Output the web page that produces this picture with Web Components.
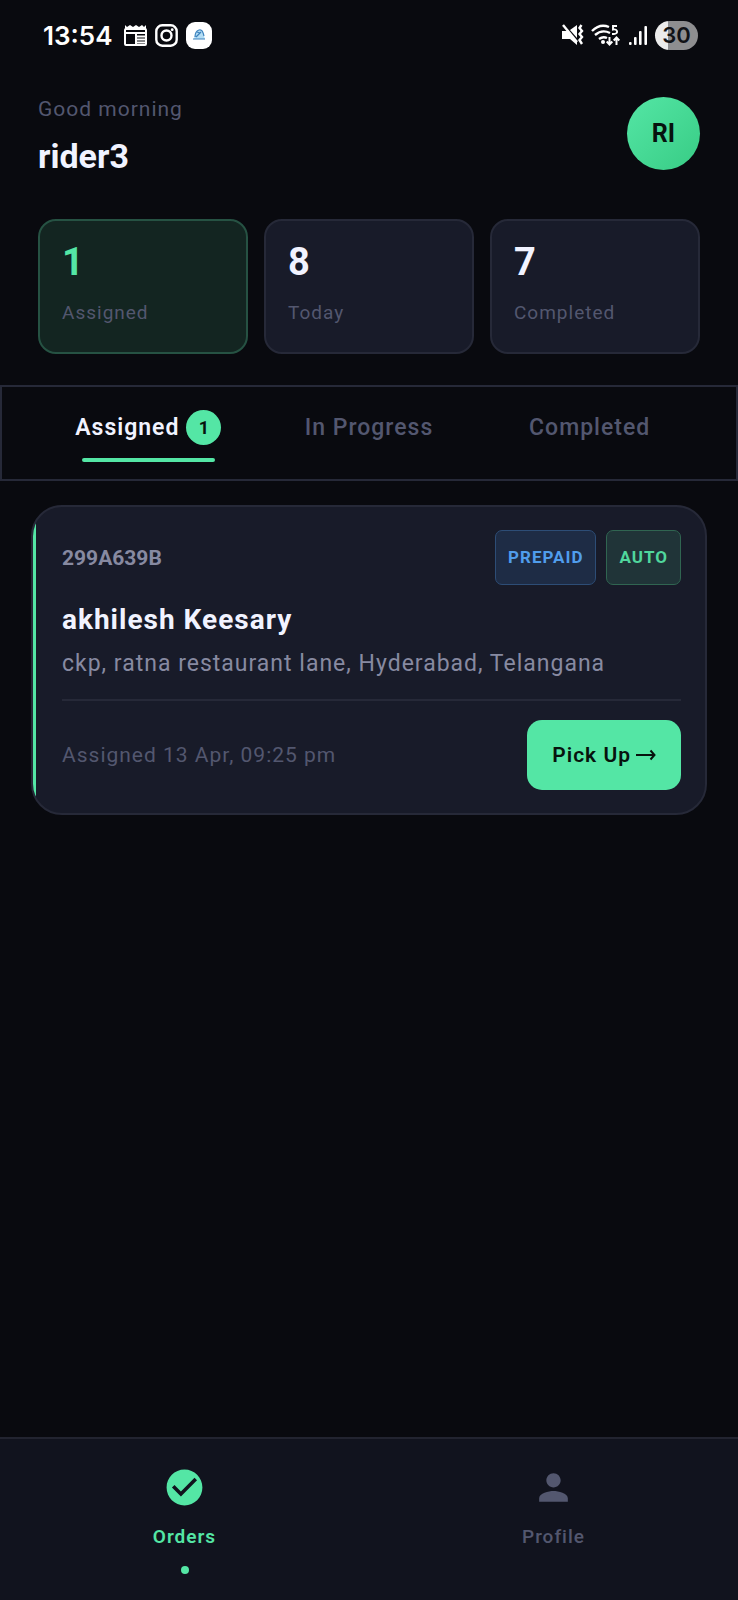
<!DOCTYPE html>
<html lang="en">
<head>
  <meta charset="UTF-8">
  <meta name="viewport" content="width=device-width, initial-scale=1">
  <title>Rider orders</title>
  <style>
    :root {
      --bg: #090a0f;
      --surface: #181b29;
      --line: #262938;
      --text: #f1f3ff;
      --soft: #878aa1;
      --muted: #53576f;
      --green: #54e6a5;
      --ink: #07130e;
      --track: 1px;
    }
    body {
      margin: 0;
      min-height: 100vh;
      display: flex;
      flex-direction: column;
      background: var(--bg);
      color: var(--text);
      font-family: Roboto, "Liberation Sans", sans-serif;
    }
    main {
      flex: 1;
    }
    .stats {
      display: grid;
      grid-template-columns: repeat(3, 1fr);
      gap: 16px;
      padding: 0 38px;
      margin-bottom: 31px;
    }
    .orders {
      padding: 24px 31px;
    }
  </style>
</head>
<body>
  <status-bar time="13:54" battery="30"></status-bar>
  <main>
    <rider-header name="rider3" initials="RI">Good morning</rider-header>
    <section class="stats">
      <stat-card value="1" active>Assigned</stat-card>
      <stat-card value="8">Today</stat-card>
      <stat-card value="7">Completed</stat-card>
    </section>
    <tab-bar>
      <tab-item count="1" active>Assigned</tab-item>
      <tab-item>In Progress</tab-item>
      <tab-item>Completed</tab-item>
    </tab-bar>
    <section class="orders">
      <order-card code="299A639B" customer="akhilesh Keesary" action="Pick Up">
        <status-chip slot="chips" type="blue">PREPAID</status-chip>
        <status-chip slot="chips">AUTO</status-chip>
        <span slot="address">ckp, ratna restaurant lane, Hyderabad, Telangana</span>
        <span slot="time">Assigned 13 Apr, 09:25 pm</span>
      </order-card>
    </section>
  </main>
  <bottom-nav>
    <nav-item href="#orders" icon="check" active>Orders</nav-item>
    <nav-item href="#profile" icon="person">Profile</nav-item>
  </bottom-nav>

  <script>
    class StatusBar extends HTMLElement {
      constructor() {
        super();
        this.attachShadow({ mode: 'open' });
        this.render();
      }

      render() {
        const style = `
        <style>
          :host {
            display: flex;
            justify-content: space-between;
            align-items: center;
            height: 70px;
            padding: 0 40px 0 43px;
            color: white;
          }
          div {
            display: flex;
            align-items: center;
          }
          svg {
            display: block;
          }
          .time {
            font-family: Inter, Roboto, sans-serif;
            font-size: 26px;
            font-weight: 600;
            margin-right: 3px;
          }
          .left {
            gap: 8px;
          }
          .right {
            gap: 7px;
          }
          .battery {
            width: 43px;
            height: 29px;
            border-radius: 15px;
            justify-content: center;
            background: linear-gradient(90deg, #ececec 30%, #8e8e90 30%);
            color: #111216;
            font-family: Inter, Roboto, sans-serif;
            font-size: 22px;
            font-weight: 600;
          }
        </style>`;

        const template = `
          <div class="left">
            <span class="time">${this.getAttribute('time')}</span>
            <svg width="23" height="22" viewBox="0 0 23 22" fill="none" stroke="#fff">
              <path d="M1 1l2 2 3-2 3 2 3-2 3 2 3-2 2 2 2-2v5H1z" fill="#fff" stroke="none"/>
              <rect x="1" y="5" width="21" height="16" rx="1" stroke-width="2"/>
              <path d="M1 9h21" stroke-width="2"/>
              <path d="M12 9v11" stroke-width="2"/>
              <path d="M13 12.500h8M13 15.500h8M13 18.500h8" stroke-width="1.800"/>
            </svg>
            <svg width="23" height="23" viewBox="0 0 23 23" fill="none" stroke="#fff" stroke-width="2.400">
              <rect x="1.300" y="1.300" width="20.400" height="20.400" rx="6"/>
              <circle cx="11.500" cy="11.500" r="5"/>
              <circle cx="17.200" cy="5.700" r="1.400" fill="#fff" stroke="none"/>
            </svg>
            <svg width="26" height="27" viewBox="0 0 26 27">
              <rect width="26" height="27" rx="9" fill="#fff"/>
              <path d="M8 17l2-8 6-1 3 9z" fill="#b4ddf4"/>
              <path d="M7 17h12M9 15c0-4 1-6 4-7s4 2 5 6M10 15l5-5M11 10l3 1" fill="none" stroke="#3c82bd" stroke-width="1.200"/>
            </svg>
          </div>
          <div class="right">
            <svg width="22" height="22" viewBox="0 0 22 22">
              <path d="M0 7h5l10 10v4l-7-6H0z" fill="#fff"/>
              <path d="M8 6l7-5v13z" fill="#fff"/>
              <path d="M1 1l14 17" stroke="#fff" stroke-width="2.400"/>
              <path d="M19.500 1l-2 3 2.500 3-2.500 3 2.500 3-2.500 3 2.500 4" fill="none" stroke="#fff" stroke-width="2.400"/>
            </svg>
            <svg width="30" height="23" viewBox="0 0 30 23" fill="none" stroke="#fff" stroke-width="2.400">
              <path d="M1 7Q9-1 18 3M4 11q7-6 15-2M8 15q4-3 8-1"/>
              <circle cx="12" cy="18" r="2" fill="#fff" stroke="none"/>
              <path d="M26 2h-4v3.500c5-1 5.500 4.500 1 4.500h-2" stroke-width="1.900"/>
              <path d="M18.500 13v7M15.700 17.500l2.800 3 2.800-3M25.500 21v-7M22.700 16.500l2.800-3 2.800 3" stroke-width="2"/>
            </svg>
            <svg width="20" height="21" viewBox="0 0 20 21" fill="#fff">
              <rect x="1" y="17" width="2.600" height="3" rx="1"/>
              <rect x="6" y="12" width="2.600" height="8" rx="1"/>
              <rect x="11" y="6" width="2.600" height="14" rx="1"/>
              <rect x="16.400" y="1" width="2.600" height="19" rx="1"/>
            </svg>
            <div class="battery">${this.getAttribute('battery')}</div>
          </div>`;

        this.shadowRoot.innerHTML = `${style} ${template}`;
      }
    }

    class RiderHeader extends HTMLElement {
      constructor() {
        super();
        this.attachShadow({ mode: 'open' });
        this.render();
      }

      render() {
        const style = `
        <style>
          :host {
            display: flex;
            justify-content: space-between;
            align-items: flex-start;
            padding: 27px 38px 42px;
          }
          p {
            margin: 0 0 14px;
            color: var(--muted);
            font-size: 21px;
            line-height: 24px;
            letter-spacing: var(--track);
          }
          h1 {
            margin: 0;
            font-size: 34px;
            line-height: 42px;
            font-weight: 700;
          }
          .avatar {
            display: flex;
            justify-content: center;
            align-items: center;
            width: 73px;
            height: 73px;
            border-radius: 50%;
            background: linear-gradient(135deg, #54e6a5, #38cc85);
            color: var(--ink);
            font-size: 25px;
            font-weight: 700;
          }
        </style>`;

        const template = `
          <div>
            <p><slot></slot></p>
            <h1>${this.getAttribute('name')}</h1>
          </div>
          <div class="avatar">${this.getAttribute('initials')}</div>`;

        this.shadowRoot.innerHTML = `${style} ${template}`;
      }
    }

    class StatCard extends HTMLElement {
      constructor() {
        super();
        this.attachShadow({ mode: 'open' });
        this.render();
      }

      render() {
        const style = `
        <style>
          :host {
            display: block;
            padding: 19px 22px 25px;
            border: 2px solid var(--line);
            border-radius: 18px;
            background: var(--surface);
          }
          :host([active]) {
            background: #132521;
            border-color: #265243;
          }
          :host([active]) .value {
            color: var(--green);
          }
          .value {
            font-size: 38px;
            line-height: 44px;
            font-weight: 700;
            margin-bottom: 15px;
          }
          .label {
            font-size: 19px;
            line-height: 28px;
            color: var(--muted);
            letter-spacing: var(--track);
          }
        </style>`;

        const template = `
          <div class="value">${this.getAttribute('value')}</div>
          <div class="label"><slot></slot></div>`;

        this.shadowRoot.innerHTML = `${style} ${template}`;
      }
    }

    class TabBar extends HTMLElement {
      constructor() {
        super();
        this.attachShadow({ mode: 'open' });
        this.shadowRoot.innerHTML = `
        <style>
          :host {
            display: grid;
            grid-template-columns: repeat(3, 1fr);
            padding: 23px 36px 17px;
            border: 2px solid var(--line);
          }
        </style>
        <slot></slot>`;
      }
    }

    class TabItem extends HTMLElement {
      constructor() {
        super();
        this.attachShadow({ mode: 'open' });
        this.render();
      }

      render() {
        const count = this.getAttribute('count');
        const style = `
        <style>
          :host {
            display: block;
          }
          button {
            display: flex;
            flex-direction: column;
            align-items: center;
            gap: 13px;
            width: 100%;
            padding: 0;
            border: 0;
            background: none;
            color: var(--muted);
            font: 500 23px/35px Roboto, sans-serif;
            letter-spacing: var(--track);
            cursor: pointer;
          }
          :host([active]) button {
            color: var(--text);
            font-weight: 600;
          }
          .label {
            display: flex;
            gap: 7px;
          }
          .count {
            width: 35px;
            height: 35px;
            border-radius: 50%;
            background: var(--green);
            color: var(--ink);
            font-size: 18px;
            font-weight: 700;
            letter-spacing: 0;
          }
          .line {
            width: 60%;
            height: 4px;
            border-radius: 2px;
          }
          :host([active]) .line {
            background: var(--green);
          }
        </style>`;

        const template = `
          <button type="button">
            <span class="label"><slot></slot>${count ? `<span class="count">${count}</span>` : ''}</span>
            <span class="line"></span>
          </button>`;

        this.shadowRoot.innerHTML = `${style} ${template}`;
      }
    }

    class StatusChip extends HTMLElement {
      constructor() {
        super();
        this.attachShadow({ mode: 'open' });
        this.shadowRoot.innerHTML = `
        <style>
          :host {
            display: block;
            padding: 0 12px;
            border: 1px solid #306551;
            border-radius: 7px;
            background: #203438;
            color: #50d79d;
            font-size: 17px;
            font-weight: 700;
            line-height: 53px;
            letter-spacing: var(--track);
          }
          :host([type="blue"]) {
            border-color: #2d4d76;
            background: #1e2c45;
            color: #509dec;
          }
        </style>
        <slot></slot>`;
      }
    }

    class OrderCard extends HTMLElement {
      constructor() {
        super();
        this.attachShadow({ mode: 'open' });
        this.render();
      }

      render() {
        const style = `
        <style>
          :host {
            display: block;
            position: relative;
            overflow: hidden;
            padding: 23px 24px 23px 29px;
            border: 2px solid var(--line);
            border-radius: 31px;
            background: var(--surface);
          }
          .stripe {
            position: absolute;
            top: 0;
            bottom: 0;
            left: 0;
            width: 3px;
            background: var(--green);
          }
          .row {
            display: flex;
            justify-content: space-between;
            align-items: center;
          }
          .chips {
            display: flex;
            gap: 10px;
          }
          .code {
            color: var(--soft);
            font-size: 21px;
            font-weight: 700;
          }
          h2 {
            margin: 16px 0 8px;
            font-size: 28px;
            line-height: 37px;
            font-weight: 700;
            letter-spacing: var(--track);
          }
          p {
            margin: 0;
            padding-bottom: 17px;
            border-bottom: 2px solid var(--line);
            color: var(--soft);
            font-size: 23px;
            line-height: 36px;
            letter-spacing: var(--track);
          }
          .foot {
            margin-top: 19px;
            color: var(--muted);
            font-size: 21px;
            letter-spacing: var(--track);
          }
          button {
            height: 70px;
            padding: 0 25px;
            border: 0;
            border-radius: 15px;
            background: var(--green);
            color: var(--ink);
            font: 600 21px Roboto, sans-serif;
            letter-spacing: var(--track);
            cursor: pointer;
            display: flex;
            align-items: center;
            gap: 5px;
          }
        </style>`;

        const template = `
          <div class="stripe"></div>
          <div class="row">
            <span class="code">${this.getAttribute('code')}</span>
            <div class="chips"><slot name="chips"></slot></div>
          </div>
          <h2>${this.getAttribute('customer')}</h2>
          <p><slot name="address"></slot></p>
          <div class="row foot">
            <slot name="time"></slot>
            <button type="button">${this.getAttribute('action')}
              <svg width="20" height="12" viewBox="0 0 20 12" fill="none" stroke="currentColor" stroke-width="2" aria-hidden="true">
                <path d="M0 6h18.500M14.500 1.500l4 4.500-4 4.500"/>
              </svg>
            </button>
          </div>`;

        this.shadowRoot.innerHTML = `${style} ${template}`;
      }
    }

    class BottomNav extends HTMLElement {
      constructor() {
        super();
        this.attachShadow({ mode: 'open' });
        this.shadowRoot.innerHTML = `
        <style>
          nav {
            display: grid;
            grid-template-columns: 1fr 1fr;
            padding: 27px 0 26px;
            border-top: 2px solid #222430;
            background: #11131e;
          }
        </style>
        <nav><slot></slot></nav>`;
      }
    }

    const icons = {
      check: 'M12 2C6.480 2 2 6.480 2 12s4.480 10 10 10 10-4.480 10-10S17.520 2 12 2zm-2 15l-5-5 1.410-1.410L10 14.170l7.590-7.590L19 8l-9 9z',
      person: 'M12 12c2.210 0 4-1.790 4-4s-1.790-4-4-4-4 1.790-4 4 1.790 4 4 4zm0 2c-2.670 0-8 1.340-8 4v2h16v-2c0-2.660-5.330-4-8-4z'
    };

    class NavItem extends HTMLElement {
      constructor() {
        super();
        this.attachShadow({ mode: 'open' });
        this.render();
      }

      render() {
        const style = `
        <style>
          :host {
            display: block;
          }
          a {
            display: flex;
            flex-direction: column;
            align-items: center;
            color: var(--muted);
            font-size: 19px;
            font-weight: 500;
            line-height: 28px;
            letter-spacing: var(--track);
            text-decoration: none;
          }
          :host([active]) a {
            color: var(--green);
            font-weight: 600;
          }
          svg {
            width: 43px;
            height: 43px;
            margin-bottom: 14px;
          }
          .dot {
            width: 8px;
            height: 8px;
            margin-top: 15px;
            border-radius: 50%;
          }
          :host([active]) .dot {
            background: var(--green);
          }
        </style>`;

        const template = `
          <a href="${this.getAttribute('href')}">
            <svg viewBox="0 0 24 24" fill="currentColor" aria-hidden="true">
              <path d="${icons[this.getAttribute('icon')]}"/>
            </svg>
            <slot></slot>
            <span class="dot"></span>
          </a>`;

        this.shadowRoot.innerHTML = `${style} ${template}`;
      }
    }

    customElements.define('status-bar', StatusBar);
    customElements.define('rider-header', RiderHeader);
    customElements.define('stat-card', StatCard);
    customElements.define('tab-bar', TabBar);
    customElements.define('tab-item', TabItem);
    customElements.define('status-chip', StatusChip);
    customElements.define('order-card', OrderCard);
    customElements.define('bottom-nav', BottomNav);
    customElements.define('nav-item', NavItem);
  </script>
</body>
</html>
